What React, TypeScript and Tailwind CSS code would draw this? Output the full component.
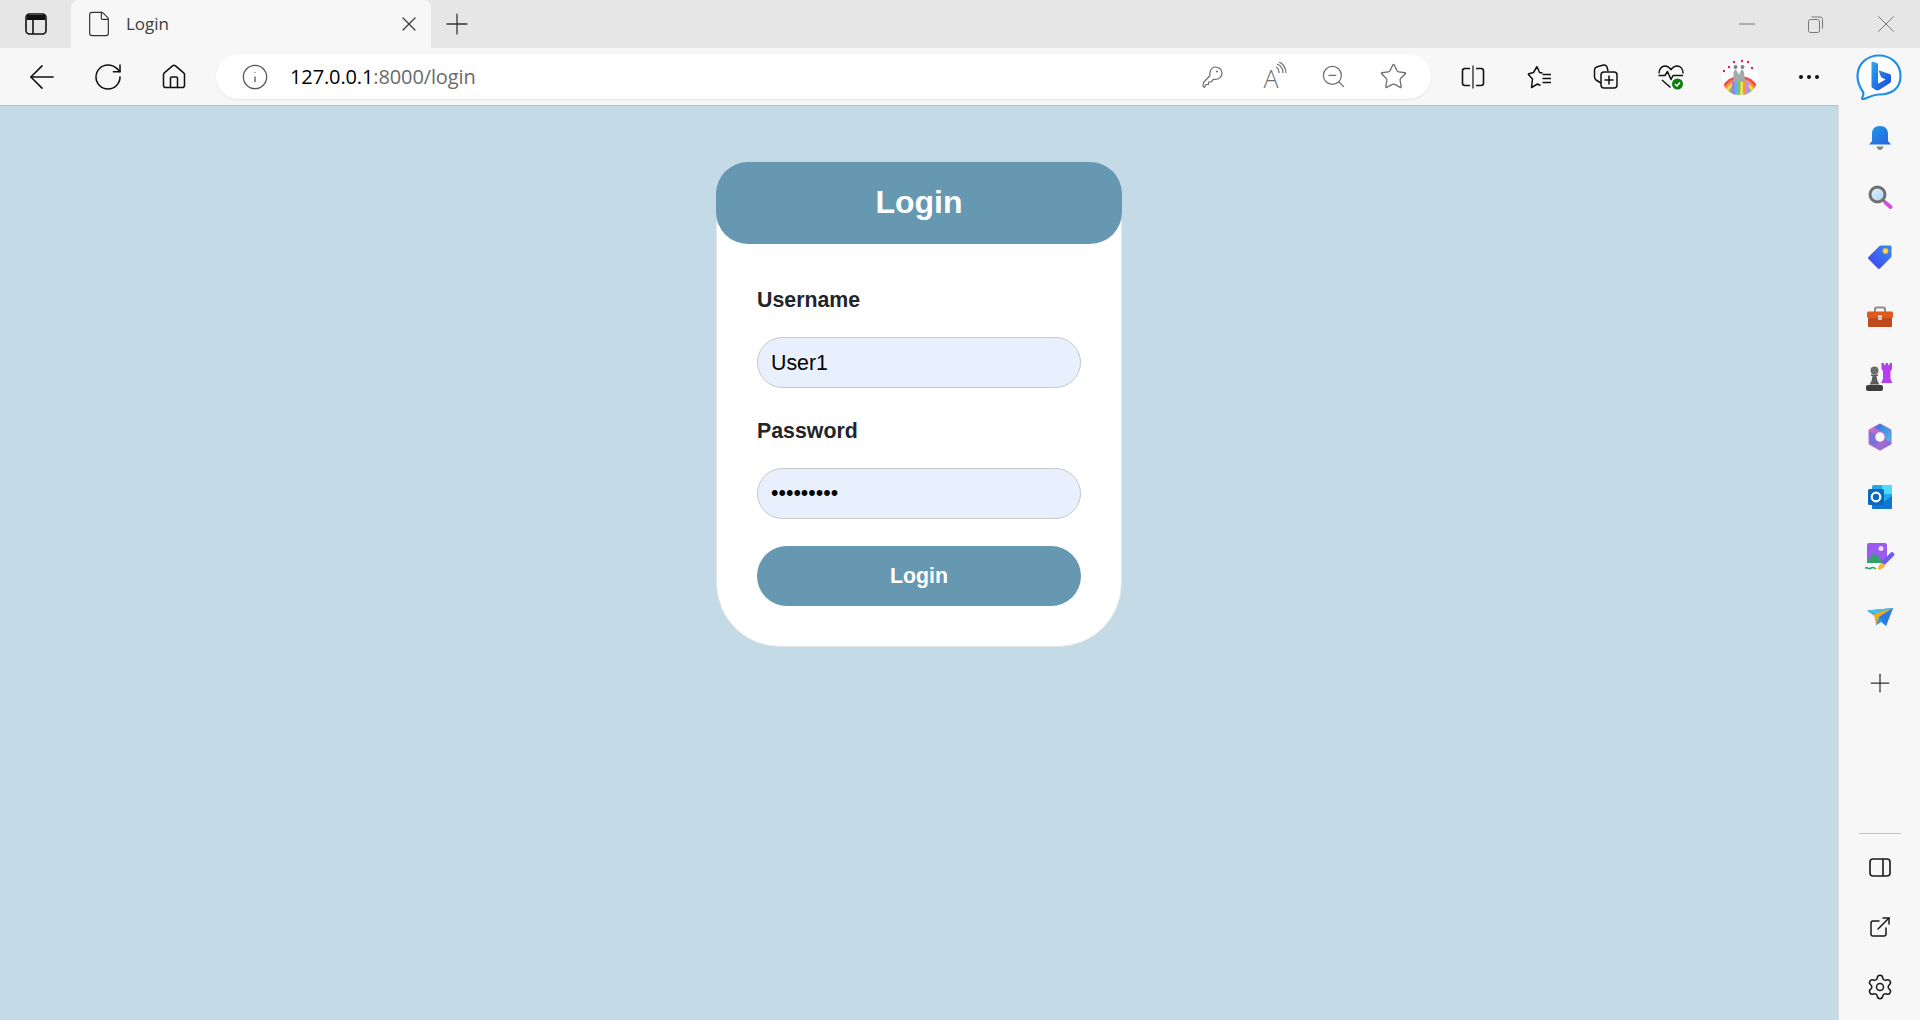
import React from "react";
import { ArrowLeft, RotateCw, Home, Info, ZoomOut, Star, Plus, X, Minus, ExternalLink, Settings, File } from "lucide-react";

const arial = "font-['Liberation_Sans',Arial,sans-serif]";

const TabsIcon = () => (
  <svg width="22" height="22" viewBox="0 0 22 22" fill="none" stroke="#111" strokeWidth="1.6">
    <rect x="1" y="1" width="20" height="20" rx="3.500" />
    <path d="M2 2h18v5H2z" fill="#111" stroke="none" />
    <path d="M8 7v14" />
  </svg>
);

const Restore = () => (
  <svg width="17" height="17" viewBox="0 0 17 17" fill="none" stroke="#777" strokeWidth="1">
    <rect x="1.500" y="3.500" width="11" height="13" rx="2" />
    <path d="M4.500 1h8.500c1.500 0 2.500 1 2.500 2.500v9" />
  </svg>
);

const KeyIcon = () => (
  <svg width="22" height="24" viewBox="0 0 22 24" fill="none" stroke="#6f6f6f" strokeWidth="1.200" strokeLinejoin="round">
    <path d="M13.500 2c3.500 0 6.500 2.500 6.500 6s-3 6.500-6.500 6.500c-.8 0-1.500-.2-2.200 0L9 17H6.500v2.500H4L2.500 22.500 1 21l.5-3.500L8 10.500c-.3-1-.3-1.800 0-3C8.700 4.500 10.500 2 13.500 2z" />
    <circle cx="15" cy="6.500" r="1" fill="#6f6f6f" stroke="none" />
  </svg>
);

const ReadAloud = () => (
  <span className="relative w-[60px] h-[30px] flex justify-center items-center">
    <span className="text-[25px] font-light leading-none -ml-[4px] mt-[4px]">A</span>
    <svg className="absolute left-[32px] top-0" width="14" height="16" viewBox="0 0 14 16" fill="none" stroke="#6f6f6f" strokeWidth="1.200">
      <path d="M1 5c2 1 3 3 3 6M2 2c4 1.500 6 5 6 9M4 0c4 1.500 7 6 7 11" />
    </svg>
  </span>
);

const SplitIcon = () => (
  <svg width="24" height="24" viewBox="0 0 24 24" fill="none" stroke="#111" strokeWidth="1.600">
    <path d="M9 3.500H4A2.500 2.500 0 0 0 1.500 6v12A2.500 2.500 0 0 0 4 20.500h5" />
    <path d="M15 3.500h5A2.500 2.500 0 0 1 22.500 6v12a2.500 2.500 0 0 1-2.500 2.500h-5" />
    <path d="M12 .5v23" strokeWidth="1.200" />
  </svg>
);

const FavList = () => (
  <svg width="24" height="24" viewBox="0 0 24 24" fill="none" stroke="#111" strokeWidth="1.500" strokeLinejoin="round">
    <path d="M10 1.500l2.500 6 3 .5M1 9l5.500-1.500L10 1.500M1 9l4.500 5-1 8.500 6-3.500 3 1.500" />
    <path d="M15.500 9.500H24M15.500 13.500H24M15.500 17.500H24" />
  </svg>
);

const Collections = () => (
  <svg width="25" height="25" viewBox="0 0 25 25" fill="none" stroke="#111" strokeWidth="1.500" strokeLinejoin="round">
    <path d="M8 19l-5-3c-1-1-1.500-2-1.500-3V6c0-1.500.8-2.500 2-3l7-2c1.500-.3 3 .5 3.500 2l1 4" />
    <rect x="8" y="8" width="16" height="16" rx="3" />
    <path d="M16 11.500v9M11.500 16h9" />
  </svg>
);

const Health = () => (
  <svg width="26" height="26" viewBox="0 0 26 26" fill="none">
    <path d="M1 9.500C1 5 4 2 7 2c2.500 0 4.500 1.500 6 3.500C14.500 3.500 16.500 2 19 2c3.500 0 6 3 6 7.500" stroke="#111" strokeWidth="1.500" />
    <path d="M.5 11.500H7l2.500-4 3.500 8 2-4h10" stroke="#111" strokeWidth="1.500" strokeLinejoin="round" />
    <path d="M4 16l8.500 7.500" stroke="#111" strokeWidth="1.500" />
    <circle cx="19.500" cy="20" r="5.500" fill="#107c10" />
    <path d="M17 20l2 2 3-3.500" stroke="#fff" strokeWidth="1.500" />
  </svg>
);

const Rainbow = () => {
  const bands = ["#ee4b4b", "#f59a36", "#f4e04c", "#69c86a", "#59b5ea", "#a67be0"];
  const stripes = ["#a67be0", "#59b5ea", "#69c86a", "#f4e04c", "#f59a36", "#c88de8"];
  return (
    <svg width="38" height="36" viewBox="0 0 38 36">
      <defs>
        <clipPath id="avatar">
          <circle cx="19" cy="18" r="18" />
        </clipPath>
      </defs>
      <g clipPath="url(#avatar)">
        <rect width="38" height="36" fill="#fff" />
        {bands.map((c, i) => (
          <circle key={c} cx="19" cy="37" r={20 - i * 2.500} fill={c} />
        ))}
        <circle cx="19" cy="37" r="5" fill="#fff" />
        {stripes.map((c, i) => (
          <rect key={c} x={11 + i * 2.800} y="22" width="2.800" height="14" fill={c} />
        ))}
        <path d="M12.500 23V13l2-3 2 3 1.500 3 1-3 2-3 2 3 1 10z" fill="#a3aaad" />
        <circle cx="14.500" cy="8" r="2" fill="#7c868d" />
        <circle cx="21.500" cy="8" r="2" fill="#7c868d" />
      </g>
      {[[3, 12], [8, 8], [13, 3], [21, 2], [27, 3], [31, 9]].map(([x, y]) => (
        <circle key={x} cx={x} cy={y} r="1.200" fill="#e5175f" />
      ))}
    </svg>
  );
};

const Dots = () => (
  <svg width="22" height="6" viewBox="0 0 22 6" fill="#111">
    <circle cx="3" cy="3" r="2" />
    <circle cx="11" cy="3" r="2" />
    <circle cx="19" cy="3" r="2" />
  </svg>
);

const Bing = () => (
  <svg width="46" height="46" viewBox="0 0 46 46">
    <defs>
      <linearGradient id="bing" x1="0" y1="0" x2="1" y2="1">
        <stop offset="0" stopColor="#2aa7f0" />
        <stop offset="1" stopColor="#1a44d8" />
      </linearGradient>
    </defs>
    <path d="M23 1.500C34 1.500 44.500 9 44.500 22S35 40.500 23 40.500c-5 0-10 2.500-15 4.500-1.500.5-2.500-.5-1.500-2 1-2 1.500-4 0-6C3 32 1.500 27.500 1.500 22 1.500 9 12 1.500 23 1.500z" fill="#fff" stroke="#1f8fe8" strokeWidth="2.200" />
    <path d="M15.500 8.500c0-.8.600-1 1.300-.8l4 1.400c.7.300 1.200.8 1.200 1.600v19l7.500-4.300-3.500-1.700c-.6-.3-1-.7-1.200-1.300l-1.800-4.700c-.3-.8.200-1.300 1-1l9.500 3.300c1 .3 1.500 1 1.500 2v5c0 .8-.4 1.500-1 1.900L23 36c-1 .6-2 .6-3 0l-3.500-2c-.6-.4-1-1-1-1.700z" fill="url(#bing)" />
  </svg>
);

const Bell = () => (
  <svg width="24" height="26" viewBox="0 0 24 26">
    <defs>
      <linearGradient id="bell" x1="0" y1="0" x2="1" y2="1">
        <stop offset="0" stopColor="#1f9be8" />
        <stop offset="1" stopColor="#2a5fe0" />
      </linearGradient>
    </defs>
    <path d="M12 1c5.500 0 8 3.500 8 8v7l3 3.500H1L4 16V9c0-4.500 2.500-8 8-8z" fill="url(#bell)" />
    <path d="M8.500 21.500h7c-.7 2-2 3.500-3.500 3.500s-2.800-1.500-3.500-3.500z" fill="#7b8287" />
  </svg>
);

const Search = () => (
  <svg width="26" height="26" viewBox="0 0 26 26">
    <defs>
      <linearGradient id="glass" x1="0" y1="0" x2="1" y2="1">
        <stop offset="0" stopColor="#e6f2fb" />
        <stop offset="1" stopColor="#a9d4f2" />
      </linearGradient>
    </defs>
    <circle cx="10.500" cy="10.500" r="7.500" fill="url(#glass)" stroke="#6f6f6f" strokeWidth="3" />
    <path d="M16.500 16.500l1.500 1.500" stroke="#6f6f6f" strokeWidth="3" />
    <path d="M19 19l4.500 4" stroke="#d24fdc" strokeWidth="4" strokeLinecap="round" />
  </svg>
);

const Tag = () => (
  <svg width="26" height="26" viewBox="0 0 26 26">
    <defs>
      <linearGradient id="tag" x1="1" y1="0" x2="0" y2="1">
        <stop offset="0" stopColor="#3a8df0" />
        <stop offset="1" stopColor="#4040f0" />
      </linearGradient>
    </defs>
    <path d="M14 1.500h9.500c.6 0 1 .4 1 1V12c0 .5-.2 1-.6 1.400L13 24.500c-.6.6-1.500.6-2.100 0L1.500 15c-.6-.6-.6-1.500 0-2.100L12.500 2c.4-.3 1-.5 1.500-.5z" fill="url(#tag)" />
    <circle cx="18.500" cy="7" r="2.900" fill="#f6c416" />
    <circle cx="18.500" cy="7" r="1.100" fill="#fff" />
  </svg>
);

const Toolbox = () => (
  <svg width="28" height="22" viewBox="0 0 28 22">
    <path d="M9 6V3c0-1 .8-1.500 1.500-1.500h7c.8 0 1.500.5 1.500 1.500v3" fill="none" stroke="#8d8d8d" strokeWidth="2" />
    <rect x="1" y="5.500" width="26" height="6.500" rx="1" fill="#e0591f" />
    <rect x="2" y="12" width="24" height="9" rx="1" fill="#bc4a1c" />
    <rect x="12" y="9" width="4" height="5" fill="#c9c9c9" />
  </svg>
);

const Chess = () => (
  <svg width="28" height="28" viewBox="0 0 28 28">
    <path d="M15.500 0h2.500v2h1.500V0h2.500v2h1.500V0H26v6l-1.500 2v8l2 4H15l2-4V8l-1.500-2z" fill="#b43ef0" />
    <circle cx="8.500" cy="7.500" r="4" fill="#6e6e6e" />
    <path d="M5 11.500h7v1.500h-1.500l1 5 2 3.500H3.500l2-3.500 1-5H5z" fill="#5c5c5c" />
    <path d="M2 22h13c1 0 2 .8 2 2v2c0 1-1 2-2 2H2c-1 0-2-1-2-2v-2c0-1.200 1-2 2-2z" fill="#3c3c3c" />
  </svg>
);

const Copilot = () => (
  <svg width="26" height="28" viewBox="0 0 26 28">
    <defs>
      <linearGradient id="m1" x1="0" y1="0" x2="1" y2="1">
        <stop offset="0" stopColor="#2f6fd8" />
        <stop offset="1" stopColor="#47c2ea" />
      </linearGradient>
      <linearGradient id="m2" x1="0" y1="0" x2="1" y2="1">
        <stop offset="0" stopColor="#d06ccb" />
        <stop offset="1" stopColor="#8a6ad8" />
      </linearGradient>
    </defs>
    <path d="M13 2l10 5.500v13L13 26 3 20.500v-13z" fill="url(#m2)" stroke="url(#m2)" strokeWidth="3" strokeLinejoin="round" />
    <path d="M13 1l10.500 6v12l-5.500-3c1-5-1-8.500-5-8.500L7 4.500z" fill="url(#m1)" />
    <path d="M2 8l6 3c-1 4 0 7 3 8l-3 4.500L3 20z" fill="#4a7ae0" opacity="0.6" />
    <circle cx="13" cy="14" r="4.700" fill="#f7f7f7" />
  </svg>
);

const Outlook = () => (
  <svg width="26" height="26" viewBox="0 0 26 26">
    <rect x="5" y="1" width="20" height="24" rx="1.500" fill="#28a8ea" />
    <path d="M5 13l10 6 10-7v12c0 .6-.5 1-1 1H6c-.6 0-1-.4-1-1z" fill="#0f78d4" />
    <rect x="15" y="1" width="10" height="9" fill="#50d9ff" />
    <rect x="1" y="5" width="16" height="16" rx="1.500" fill="#0c68bd" />
    <circle cx="9" cy="13" r="4.300" fill="none" stroke="#fff" strokeWidth="2.200" />
  </svg>
);

const Designer = () => (
  <svg width="30" height="28" viewBox="0 0 30 28">
    <rect x="2" y="0" width="20" height="20" rx="2" fill="#9a5cf0" />
    <path d="M2 18l7-8 9 8v2H2z" fill="#2fa36b" />
    <circle cx="16" cy="5.500" r="2.500" fill="#ecdcff" />
    <path d="M18.500 20l8.500-8.500" stroke="#6a5cf0" strokeWidth="4.500" strokeLinecap="round" />
    <path d="M13 26.500c0-3.500 2.500-6.500 4.500-6.500l2.500 2c-.5 3-4 5-7 4.500z" fill="#f2b632" />
    <path d="M0 25.500c2-2.500 3 1 5 0s3-2 6 .5" fill="none" stroke="#2fa36b" strokeWidth="1.600" />
  </svg>
);

const Send = () => (
  <svg width="28" height="20" viewBox="0 0 28 20">
    <path d="M1 3.500L27 1 20 19l-5-4-5 3.500 1-8z" fill="#2f9be8" />
    <path d="M1 3.500L27 1 9 7z" fill="#3fc0f2" />
    <path d="M8 7l19-6-14 9-3 8z" fill="#f2a81e" />
    <path d="M13 10L27 1 20 19z" fill="#2a7ce0" />
  </svg>
);

const DockIcon = () => (
  <svg width="22" height="19" viewBox="0 0 22 19" fill="none" stroke="#1a1a1a" strokeWidth="1.600">
    <rect x="1" y="1" width="20" height="17" rx="3" />
    <path d="M14 1v17" />
  </svg>
);

const SideItem = ({ children }: { children: React.ReactNode }) => (
  <div className="h-[60px] flex items-center justify-center">{children}</div>
);

const Sidebar = () => (
  <aside className="w-[82px] shrink-0 bg-[#f7f7f7] border-l border-[#d9d9d9] flex flex-col items-center pt-[9px] pb-[3px] -mt-[1px]">
    <div className="h-[48px] mb-[5px] flex items-center justify-center"><Bell /></div>
    <SideItem><Search /></SideItem>
    <SideItem><Tag /></SideItem>
    <SideItem><Toolbox /></SideItem>
    <SideItem><Chess /></SideItem>
    <SideItem><Copilot /></SideItem>
    <SideItem><Outlook /></SideItem>
    <SideItem><Designer /></SideItem>
    <SideItem><Send /></SideItem>
    <div className="h-[60px] mt-[6px] flex items-center justify-center text-[#333]"><Plus size={30} strokeWidth={1} /></div>
    <div className="mt-auto mb-[3px] w-[42px] border-t border-[#c4c4c4]" />
    <SideItem><DockIcon /></SideItem>
    <div className="h-[60px] flex items-center justify-center text-[#1a1a1a]"><ExternalLink size={24} strokeWidth={1.5} /></div>
    <div className="h-[60px] flex items-center justify-center text-[#1a1a1a]"><Settings size={28} strokeWidth={1.3} /></div>
  </aside>
);

export default function App() {
  return (
    <div className={`h-[1020px] w-[1920px] flex flex-col overflow-hidden bg-[#c4dbe7] ${arial}`}>
      {/* title bar */}
      <div className="h-[48px] shrink-0 bg-[#e6e6e6] flex items-end">
        <div className="w-[71px] h-[48px] flex items-center justify-center">
          <TabsIcon />
        </div>
        <div className="w-[360px] h-[48px] bg-[#f7f7f7] rounded-t-[8px] flex items-center pl-[14px] pr-[10px] font-['Open_Sans',sans-serif] text-[#3c3c3c]">
          <File size={28} strokeWidth={1} className="text-[#333]" />
          <span className="ml-[13px] text-[17px] flex-1">Login</span>
          <X size={24} strokeWidth={1.3} />
        </div>
        <div className="w-[52px] h-[48px] flex items-center justify-center text-[#333]">
          <Plus size={34} strokeWidth={0.9} />
        </div>
        <div className="flex-1" />
        <div className="w-[183px] h-[48px] flex items-center justify-between pr-[19px] text-[#777]">
          <Minus size={26} strokeWidth={1} className="-ml-[3px]" />
          <Restore />
          <X size={30} strokeWidth={0.8} />
        </div>
      </div>

      {/* toolbar */}
      <div className="h-[58px] shrink-0 bg-[#f7f7f7] border-b border-[#bdbdbd] flex items-center text-[#111]">
        <div className="w-[84px] flex justify-center"><ArrowLeft size={38} strokeWidth={1} /></div>
        <div className="w-[48px] flex justify-center"><RotateCw size={32} strokeWidth={1.15} /></div>
        <div className="w-[84px] flex justify-center"><Home size={28} strokeWidth={1.3} /></div>
        <div className="w-[1215px] h-[45px] shrink-0 rounded-full bg-white shadow-[0_1px_2px_rgba(0,0,0,0.08)] flex items-center font-['Open_Sans',sans-serif]">
          <Info size={28} strokeWidth={1.1} className="ml-[25px] text-[#555]" />
          <span className="ml-[21px] text-[20px] tracking-[-0.12px] text-black">127.0.0.1<span className="text-[#6a6a6a]">:8000/login</span></span>
          <div className="ml-auto mr-[8px] flex items-center text-[#6f6f6f]">
            <span className="w-[60px] flex justify-center"><KeyIcon /></span>
            <ReadAloud />
            <span className="w-[60px] flex justify-center"><ZoomOut size={27} strokeWidth={1.1} /></span>
            <span className="w-[60px] flex justify-center"><Star size={29} strokeWidth={1.1} /></span>
          </div>
        </div>
        <div className="w-[84px] shrink-0 flex justify-center"><SplitIcon /></div>
        <div className="w-[48px] shrink-0 flex justify-center"><FavList /></div>
        <div className="w-[84px] shrink-0 flex justify-center"><Collections /></div>
        <div className="w-[48px] shrink-0 flex justify-center"><Health /></div>
        <div className="w-[90px] shrink-0 flex justify-center"><Rainbow /></div>
        <div className="w-[48px] shrink-0 flex justify-center"><Dots /></div>
        <div className="w-[84px] shrink-0 ml-[3px] pl-[2px] flex justify-center"><Bing /></div>
      </div>

      {/* content */}
      <div className="flex-1 flex min-h-0">
        <main className="flex-1 flex justify-center pt-[56px]">
          <div className="w-[406px] h-[485px] bg-white border border-[#e2e4e6] rounded-[64px]">
            <div className="-mx-[1px] -mt-[1px] h-[82px] bg-[#6798b2] rounded-[32px] flex items-center justify-center pb-[2px]">
              <h1 className="text-[32px] font-bold text-white leading-none">Login</h1>
            </div>
            <form className="px-[40px] pt-[44px] flex flex-col">
              <label className="text-[21.33px] font-bold text-[#212529] leading-[24px]">Username</label>
              <input readOnly value="User1" className="mt-[25px] h-[51px] w-[324px] rounded-full border border-[#c8c8c8] bg-[#e8f0fe] px-[13px] pt-[1px] text-[21.33px] text-black outline-none" />
              <label className="mt-[31px] text-[21.33px] font-bold text-[#212529] leading-[24px]">Password</label>
              <input readOnly type="password" value="123456789" className="mt-[25px] h-[51px] w-[324px] rounded-full border border-[#c8c8c8] bg-[#e8f0fe] px-[13px] text-[21.33px] text-black outline-none" />
              <button type="button" className="mt-[27px] h-[60px] w-[324px] rounded-full bg-[#6798b2] text-white text-[21.33px] font-bold pt-[1px]">Login</button>
            </form>
          </div>
        </main>
        <Sidebar />
      </div>
    </div>
  );
}
